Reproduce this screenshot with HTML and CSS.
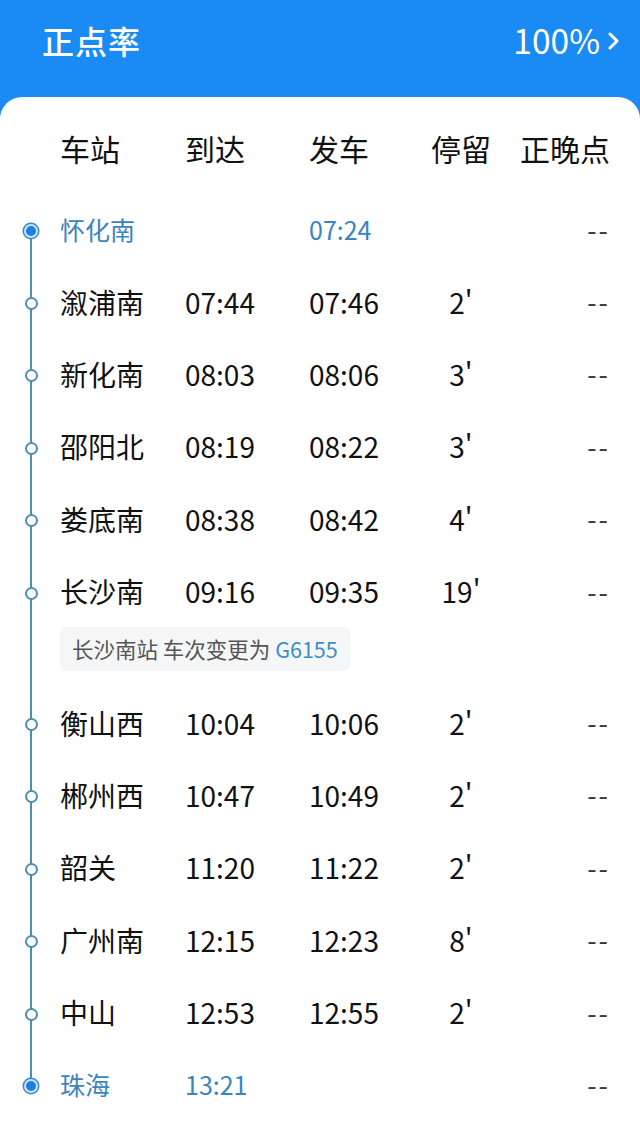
FILE: index.html
```html
<!DOCTYPE html>
<html lang="zh-CN">
<head>
  <meta charset="UTF-8">
  <meta name="viewport" content="width=device-width, initial-scale=1.0">
  <title>正点率</title>
  <link rel="stylesheet" href="styles.css">
</head>
<body>

  <div class="topbar">
    <h1>正点率</h1>
    <div class="rate">100%
      <svg class="chevron" viewBox="0 0 12 20" width="12" height="20">
        <path d="M2 3 L9 10 L2 17" fill="none" stroke="#fff" stroke-width="3" stroke-linecap="round" stroke-linejoin="round"/>
      </svg>
    </div>
  </div>

  <div class="card">
    <div class="row head">
      <span>车站</span>
      <span>到达</span>
      <span>发车</span>
      <span class="stop">停留</span>
      <span class="late">正晚点</span>
    </div>

    <div class="stations">
      <div class="row end">
        <i class="dot"></i>
        <span>怀化南</span>
        <span></span>
        <span>07:24</span>
        <span class="stop"></span>
        <span class="late">--</span>
      </div>
      <div class="row">
        <i class="dot"></i>
        <span>溆浦南</span>
        <span>07:44</span>
        <span>07:46</span>
        <span class="stop">2'</span>
        <span class="late">--</span>
      </div>
      <div class="row">
        <i class="dot"></i>
        <span>新化南</span>
        <span>08:03</span>
        <span>08:06</span>
        <span class="stop">3'</span>
        <span class="late">--</span>
      </div>
      <div class="row">
        <i class="dot"></i>
        <span>邵阳北</span>
        <span>08:19</span>
        <span>08:22</span>
        <span class="stop">3'</span>
        <span class="late">--</span>
      </div>
      <div class="row">
        <i class="dot"></i>
        <span>娄底南</span>
        <span>08:38</span>
        <span>08:42</span>
        <span class="stop">4'</span>
        <span class="late">--</span>
      </div>
      <div class="row">
        <i class="dot"></i>
        <span>长沙南</span>
        <span>09:16</span>
        <span>09:35</span>
        <span class="stop">19'</span>
        <span class="late">--</span>
      </div>

      <div class="notice">
        <div class="notice-box">长沙南站 车次变更为 <em>G6155</em></div>
      </div>

      <div class="row">
        <i class="dot"></i>
        <span>衡山西</span>
        <span>10:04</span>
        <span>10:06</span>
        <span class="stop">2'</span>
        <span class="late">--</span>
      </div>
      <div class="row">
        <i class="dot"></i>
        <span>郴州西</span>
        <span>10:47</span>
        <span>10:49</span>
        <span class="stop">2'</span>
        <span class="late">--</span>
      </div>
      <div class="row">
        <i class="dot"></i>
        <span>韶关</span>
        <span>11:20</span>
        <span>11:22</span>
        <span class="stop">2'</span>
        <span class="late">--</span>
      </div>
      <div class="row">
        <i class="dot"></i>
        <span>广州南</span>
        <span>12:15</span>
        <span>12:23</span>
        <span class="stop">8'</span>
        <span class="late">--</span>
      </div>
      <div class="row">
        <i class="dot"></i>
        <span>中山</span>
        <span>12:53</span>
        <span>12:55</span>
        <span class="stop">2'</span>
        <span class="late">--</span>
      </div>
      <div class="row end">
        <i class="dot"></i>
        <span>珠海</span>
        <span>13:21</span>
        <span></span>
        <span class="stop"></span>
        <span class="late">--</span>
      </div>
    </div>
  </div>

</body>
</html>
```

FILE: styles.css
```css
body {
  margin: 0;
  padding: 0;
  font-family: "Noto Sans CJK SC", "Noto Sans", sans-serif;
  background-color: #1a8bf5;
  color: #111;
  overflow: hidden;
}

.topbar {
  display: flex;
  justify-content: space-between;
  align-items: center;
  height: 97px;
  padding: 0 20px 18px 42px;
  box-sizing: border-box;
  color: #fff;
}

.topbar h1 {
  margin: 0;
  font-size: 32px;
  font-weight: 500;
  letter-spacing: 1px;
}

.rate {
  display: flex;
  align-items: center;
  gap: 8px;
  font-size: 33.5px;
  font-weight: 400;
}

.chevron {
  margin-top: 2px;
}

.card {
  background-color: #fff;
  border-radius: 22px 22px 0 0;
  min-height: 1041px;
}

.row {
  display: grid;
  grid-template-columns: 60px 125px 124px 111px 82px 1fr;
  align-items: center;
  height: 72.4px;
  font-size: 28px;
  padding-right: 32px;
}

.row span {
  margin-bottom: 4px;
}

.row.head {
  height: 98px;
  padding-top: 8px;
  box-sizing: border-box;
  font-size: 30px;
  padding-right: 30px;
}

.row.head span:first-child {
  grid-column: 2;
}

.stop {
  text-align: center;
}

.late {
  text-align: right;
  font-size: 27px;
  letter-spacing: 2px;
  margin-right: -2px;
  color: #3a3a3a;
}

.head .late {
  font-size: 30px;
  letter-spacing: 0;
  margin-right: 0;
  color: #111;
}

.row.end {
  font-size: 25px;
  color: #3a84c0;
}

.row.end .late {
  font-size: 27px;
  color: #3a3a3a;
}

.stations {
  position: relative;
}

/* vertical line from first to last stop */
.stations::before {
  content: "";
  position: absolute;
  left: 30px;
  top: 36px;
  bottom: 36px;
  width: 2px;
  background-color: #4f8fae;
}

.dot {
  justify-self: center;
  margin-left: 2px;
  width: 9px;
  height: 9px;
  border: 2px solid #4f8fae;
  border-radius: 50%;
  background-color: #fff;
  position: relative;
  z-index: 1;
}

.end .dot {
  width: 10px;
  height: 10px;
  border: 2px solid #cfe3f7;
  background-color: #1c7fe3;
  box-shadow: 0 0 0 1.5px #3d87c6;
}

.notice {
  height: 59px;
  padding-left: 60px;
}

.notice-box {
  display: inline-block;
  margin-top: -2px;
  padding: 0 12px;
  height: 44px;
  line-height: 44px;
  width: 266px;
  background-color: #f4f6f8;
  border-radius: 6px;
  font-size: 21.5px;
  color: #555;
}

.notice-box em {
  font-style: normal;
  color: #3b8ec6;
}
```
